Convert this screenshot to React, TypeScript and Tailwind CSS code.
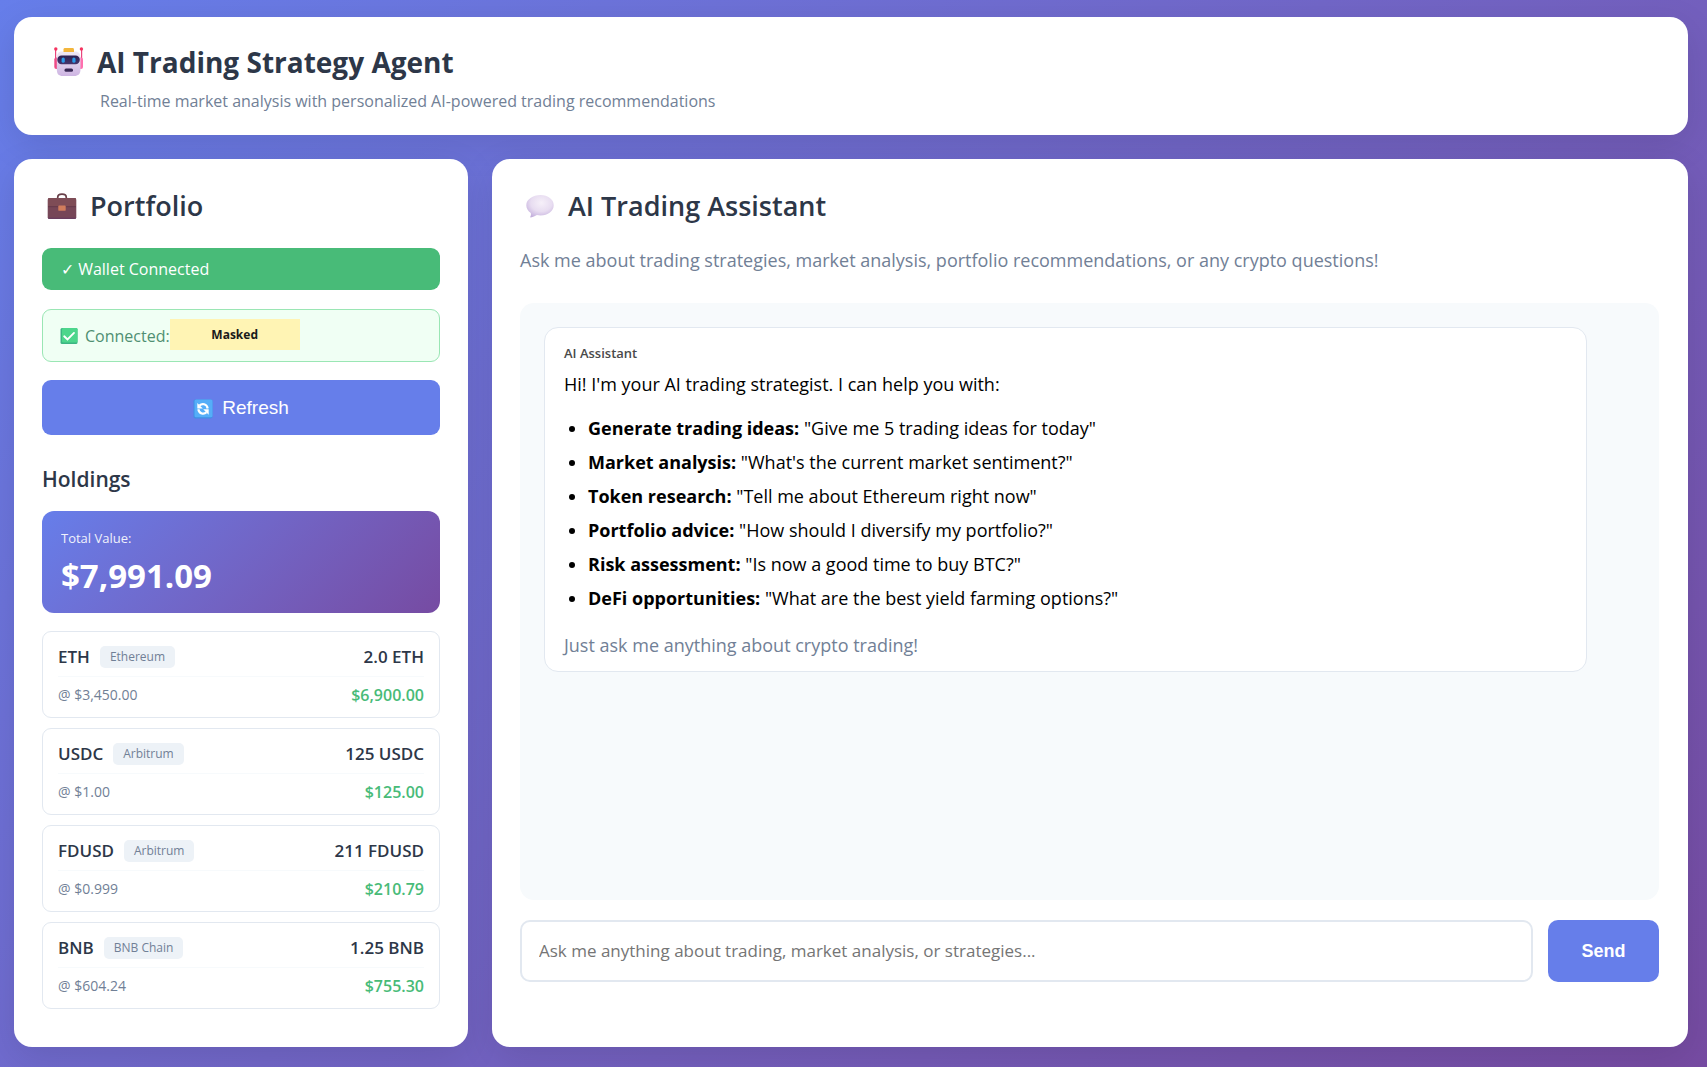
import React from "react";

const holdings = [
  { symbol: "ETH", chain: "Ethereum", amount: "2.0 ETH", price: "@ $3,450.00", value: "$6,900.00" },
  { symbol: "USDC", chain: "Arbitrum", amount: "125 USDC", price: "@ $1.00", value: "$125.00" },
  { symbol: "FDUSD", chain: "Arbitrum", amount: "211 FDUSD", price: "@ $0.999", value: "$210.79" },
  { symbol: "BNB", chain: "BNB Chain", amount: "1.25 BNB", price: "@ $604.24", value: "$755.30" },
];

const topics = [
  { label: "Generate trading ideas:", example: '"Give me 5 trading ideas for today"' },
  { label: "Market analysis:", example: '"What\'s the current market sentiment?"' },
  { label: "Token research:", example: '"Tell me about Ethereum right now"' },
  { label: "Portfolio advice:", example: '"How should I diversify my portfolio?"' },
  { label: "Risk assessment:", example: '"Is now a good time to buy BTC?"' },
  { label: "DeFi opportunities:", example: '"What are the best yield farming options?"' },
];

function RobotIcon() {
  return (
    <svg className="size-[30px] shrink-0" viewBox="0 0 30 30" aria-hidden="true">
      <defs>
        <linearGradient id="robotFace" x1="0" y1="0" x2="0" y2="1">
          <stop offset="0" stopColor="#f0eaf5" />
          <stop offset="1" stopColor="#cdb4e2" />
        </linearGradient>
        <linearGradient id="robotVisor" x1="0" y1="0" x2="0" y2="1">
          <stop offset="0" stopColor="#2c2050" />
          <stop offset="1" stopColor="#46366e" />
        </linearGradient>
      </defs>
      <rect x="1" y="2" width="1.2" height="12" fill="#e8457c" />
      <rect x="27" y="2" width="1.2" height="12" fill="#e8457c" />
      <circle cx="1.8" cy="2" r="1.7" fill="#f5335f" />
      <circle cx="27.4" cy="2" r="1.7" fill="#f5335f" />
      <rect x="0.3" y="10.5" width="5" height="11.5" rx="2" fill="#ee4a86" />
      <rect x="24" y="10.5" width="5" height="11.5" rx="2" fill="#ff70ae" />
      <path d="M8 4.500h13c4 0 5.500 2.500 5.500 7v10.500c0 5-2 7-6.500 7H9c-4.500 0-6.200-2-6.200-7V11.500C2.800 7 4 4.500 8 4.500z" fill="url(#robotFace)" />
      <path d="M9.500 5V2.500C9.500 1.400 10.300 1 11.500 1h6.500c1.200 0 2 .4 2 1.500V5z" fill="#f3b63c" />
      <rect x="3.300" y="8.500" width="22.500" height="8.800" rx="4.200" fill="url(#robotVisor)" />
      <rect x="7.600" y="10.500" width="3.200" height="5.300" rx="1.600" fill="#2a9be8" />
      <rect x="18.300" y="10.500" width="3.200" height="5.300" rx="1.600" fill="#2a9be8" />
      <rect x="10.500" y="21.500" width="8.500" height="3.300" rx="1.500" fill="#392955" />
    </svg>
  );
}

function BriefcaseIcon() {
  return (
    <svg className="size-[30px] shrink-0" viewBox="0 0 30 30" aria-hidden="true">
      <path d="M10.700 8V6.500C10.700 4.300 12 3.200 15 3.200s4.300 1.100 4.300 3.300V8" fill="none" stroke="#68404a" strokeWidth="1.700" />
      <rect x="0.700" y="7" width="28.600" height="21" rx="1.800" fill="#764657" />
      <path d="M1 7.800C1 7.200 1.500 7 2.500 7h25c1 0 1.500.2 1.500.8v7.700H1z" fill="#7e4c56" />
      <path d="M1 15.700h28" stroke="#62384a" strokeWidth="0.900" />
      <path d="M1 27.200h28" stroke="#643a63" strokeWidth="1" />
      <rect x="11.300" y="14.500" width="7.400" height="5.300" rx="0.900" fill="#d07c5c" />
    </svg>
  );
}

function BubbleIcon() {
  return (
    <svg className="size-[30px] shrink-0" viewBox="0 0 30 30" aria-hidden="true">
      <defs>
        <radialGradient id="bubbleFill" cx="0.550" cy="0.350" r="0.700">
          <stop offset="0" stopColor="#f6f0f9" />
          <stop offset="0.550" stopColor="#e8ddf1" />
          <stop offset="1" stopColor="#c3afdc" />
        </radialGradient>
      </defs>
      <path d="M15.500 4C23 4 28.700 8.300 28.700 14.200S23 24.500 15.500 24.500c-1.200 0-2.500-.1-3.600-.4-1.800 1.200-4 2.200-6 2.400-.6 0-.8-.5-.5-1 .6-1.100.7-2.400.4-3.600C3 20 1.300 17.300 1.300 14.200 1.300 8.300 8 4 15.500 4z" fill="url(#bubbleFill)" />
    </svg>
  );
}

function CheckBoxIcon() {
  return (
    <svg className="size-[18px] shrink-0" viewBox="0 0 18 18" aria-hidden="true">
      <rect x="0.500" y="1" width="17" height="16" rx="1.500" fill="#3cb583" />
      <rect x="2" y="1" width="15.500" height="14.500" rx="1.300" fill="#4dd68c" />
      <path d="M4.200 9.300l3.300 3.200 6.500-6.600" fill="none" stroke="#fff" strokeWidth="1.900" strokeLinecap="round" />
    </svg>
  );
}

function RefreshIcon() {
  return (
    <svg className="size-[20px] shrink-0" viewBox="0 0 20 20" aria-hidden="true">
      <rect x="0.500" y="0.500" width="19" height="19" rx="1.800" fill="#3f8fe4" />
      <rect x="1.500" y="0.500" width="18" height="17.800" rx="1.600" fill="#55aef8" />
      <path d="M6.500 6.500C9 4.200 13.800 4.600 14.700 9.500" fill="none" stroke="#fff" strokeWidth="2.200" />
      <path d="M4.300 4v5.500h5.500z" fill="#fff" />
      <path d="M13.500 13.300c-2.500 2.300-7.300 1.900-8.200-3" fill="none" stroke="#fff" strokeWidth="2.200" />
      <path d="M15.700 15.800v-5.500h-5.500z" fill="#fff" />
    </svg>
  );
}

const panel = "rounded-[18px] bg-white shadow-[0_10px_36px_rgba(0,0,0,0.1)]";

export default function App() {
  return (
    <div className="flex min-h-screen flex-col gap-6 bg-linear-135 from-[#667eea] to-[#764ba2] pt-[17px] pr-[19px] pb-5 pl-[14px] font-['Open_Sans','Noto_Sans',sans-serif] text-[#2d3748]">
      <header className={`${panel} px-10 pt-[26px] pb-5`}>
        <div className="flex items-center gap-[13px]">
          <RobotIcon />
          <h1 className="text-[28px] leading-[38px] font-bold">AI Trading Strategy Agent</h1>
        </div>
        <p className="mt-[6px] ml-[46px] text-base leading-7 text-[#718096]">
          Real-time market analysis with personalized AI-powered trading recommendations
        </p>
      </header>

      <div className="flex flex-1 gap-6">
        <aside className={`${panel} w-[454px] shrink-0 px-7 pt-[26px]`}>
          <div className="flex items-center gap-[13px] pl-[5px]">
            <BriefcaseIcon />
            <h2 className="text-[27px] leading-[42px] font-semibold">Portfolio</h2>
          </div>

          <div className="mt-[21px] rounded-[9px] bg-[#48bb78] px-[19px] text-base leading-[42px] text-white">✓ Wallet Connected</div>

          <div className="mt-[19px] flex h-[53px] items-center rounded-[9px] border border-[#9ae6b4] bg-[#f0fff4] px-[17px] text-base text-[#4f8f72]">
            <CheckBoxIcon />
            <span className="ml-[7px]">Connected:</span>
            <span className="mb-[2px] flex h-[31px] w-[130px] items-center justify-center bg-[#fff4b4] text-xs font-bold text-[#1a1a1a]">
              Masked
            </span>
          </div>

          <button
            type="button"
            className="mt-[18px] flex h-[55px] w-full items-center justify-center gap-[9px] rounded-[9px] bg-[#667eea] pt-[2px] font-['Liberation_Sans',Arial,sans-serif] text-[19px] text-white"
          >
            <RefreshIcon />
            Refresh
          </button>

          <h3 className="mt-7 text-[21px] leading-8 font-semibold">Holdings</h3>

          <div className="mt-4 rounded-xl bg-linear-135 from-[#667eea] to-[#764ba2] px-[19px] pt-4 pb-[14px] text-white">
            <div className="text-[13px] leading-[22px] opacity-90">Total Value:</div>
            <div className="mt-1 text-[33px] leading-[46px] font-bold">$7,991.09</div>
          </div>

          <ul className="mt-[18px] flex flex-col gap-[10px]">
            {holdings.map((h) => (
              <li key={h.symbol} className="rounded-[9px] border border-[#e2e8f0] px-[15px] pt-[11px] pb-[9px]">
                <div className="flex items-center justify-between border-b border-[#f7fafc] pb-[5px] text-[17px] leading-7 font-semibold">
                  <div className="flex items-center gap-[10px]">
                    <span>{h.symbol}</span>
                    <span className="rounded-[5px] bg-[#edf2f7] px-[10px] text-xs leading-[22px] font-normal text-[#718096]">
                      {h.chain}
                    </span>
                  </div>
                  <span>{h.amount}</span>
                </div>
                <div className="flex items-center justify-between pt-[5px] leading-[26px]">
                  <span className="text-sm leading-[26px] text-[#718096]">{h.price}</span>
                  <span className="text-base leading-[26px] font-semibold text-[#48bb78]">{h.value}</span>
                </div>
              </li>
            ))}
          </ul>
        </aside>

        <main className={`${panel} flex min-w-0 flex-1 flex-col pt-[26px] pr-[29px] pl-7`}>
          <div className="flex items-center gap-[13px] pl-[5px]">
            <BubbleIcon />
            <h2 className="text-[27px] leading-[42px] font-semibold">AI Trading Assistant</h2>
          </div>
          <p className="mt-[18px] text-lg leading-[30px] text-[#718096]">
            Ask me about trading strategies, market analysis, portfolio recommendations, or any crypto questions!
          </p>

          <section className="mt-[28px] h-[597px] rounded-[14px] bg-[#f7fafc] p-6" aria-label="Conversation">
            <article className="mr-12 rounded-[14px] border border-[#e2e8f0] bg-white px-[19px] pt-[14px] pb-[9px] text-lg text-black">
              <div className="text-[13px] leading-[22px] font-semibold text-[#4a4a4a]">AI Assistant</div>
              <p className="mt-[3px] leading-[34px]">Hi! I'm your AI trading strategist. I can help you with:</p>
              <ul className="mt-[10px] mb-[13px] list-disc pl-6">
                {topics.map((t) => (
                  <li key={t.label} className="leading-[34px]">
                    <strong>{t.label}</strong> {t.example}
                  </li>
                ))}
              </ul>
              <p className="leading-[34px] text-[#718096]">Just ask me anything about crypto trading!</p>
            </article>
          </section>

          <form className="mt-5 flex h-[62px] gap-[15px]" onSubmit={(e) => e.preventDefault()}>
            <input
              type="text"
              aria-label="Message"
              placeholder="Ask me anything about trading, market analysis, or strategies..."
              className="min-w-0 flex-1 rounded-[10px] border-2 border-[#e2e8f0] bg-white px-[17px] text-[17px] placeholder:text-[#757575]"
            />
            <button
              type="submit"
              className="w-[111px] rounded-[10px] bg-[#667eea] font-['Liberation_Sans',Arial,sans-serif] text-lg font-bold text-white"
            >
              Send
            </button>
          </form>
        </main>
      </div>
    </div>
  );
}
